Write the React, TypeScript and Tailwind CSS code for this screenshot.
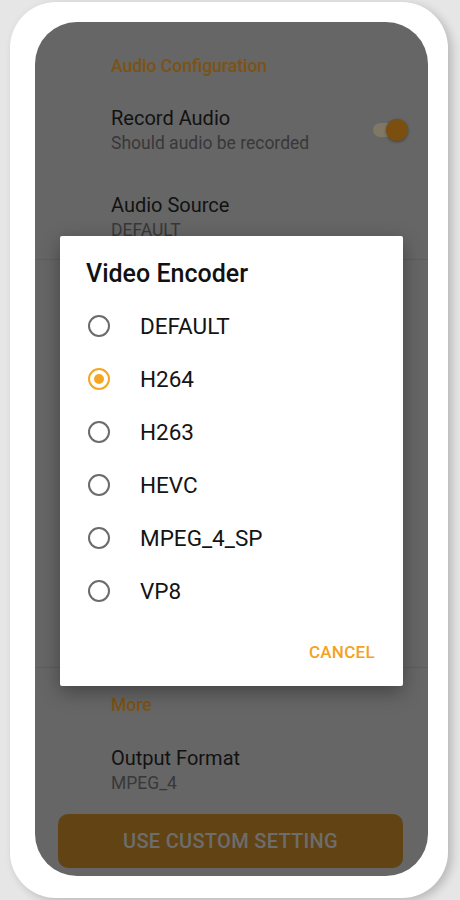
import React from "react";

const options = ["DEFAULT", "H264", "H263", "HEVC", "MPEG_4_SP", "VP8"];

export default function App() {
  return (
    <div
      className="w-[460px] h-[900px] bg-[#e6e6e6] overflow-hidden pt-[2px] pl-[10px]"
      style={{ fontFamily: "Roboto, 'Noto Sans', Arial, sans-serif" }}
    >
      <div className="w-[438px] h-[896px] rounded-[46px] bg-white shadow-[4px_3px_10px_rgba(0,0,0,0.2)] pt-[20px] pl-[25px] pr-[20px] pb-[22px]">
        <div className="relative w-[393px] h-[854px] rounded-[42px] bg-[#666666] overflow-hidden">
          {/* underlying settings content */}
          <div className="flex flex-col">
            <div className="pl-[76px] pt-[31px] text-[17.5px] leading-[26px] font-medium text-[#7c5314]">
              Audio Configuration
            </div>
            <div className="flex items-center pl-[76px] pr-[20px] mt-[26px]">
              <div className="flex-1 flex flex-col">
                <span className="text-[20px] leading-[26px] text-[#121212]">Record Audio</span>
                <span className="text-[17.5px] leading-[24px] text-[#383838]">Should audio be recorded</span>
              </div>
              <div className="relative w-[36px] h-[22px] flex items-center">
                <div className="w-[30px] h-[14px] rounded-full bg-[#807866] ml-[1px]" />
                <div className="absolute right-0 top-0 w-[22px] h-[22px] rounded-full bg-[#7a4f10] shadow-[0_1px_3px_rgba(0,0,0,0.35)]" />
              </div>
            </div>
            <div className="flex flex-col pl-[76px] mt-[37px]">
              <span className="text-[20px] leading-[26px] text-[#121212]">Audio Source</span>
              <span className="text-[17.5px] leading-[24px] text-[#383838]">DEFAULT</span>
            </div>
            <div className="h-[1px] bg-[#5e5e5e] mt-[17px]" />
            <div className="h-[407px]" />
            <div className="h-[1px] bg-[#5e5e5e]" />
            <div className="pl-[76px] mt-[25px] text-[17.5px] leading-[24px] font-medium text-[#7c5314]">More</div>
            <div className="flex flex-col pl-[76px] mt-[28px]">
              <span className="text-[20px] leading-[26px] text-[#121212]">Output Format</span>
              <span className="text-[17.5px] leading-[24px] text-[#383838]">MPEG_4</span>
            </div>
            <div className="ml-[23px] mr-[25px] mt-[19px] h-[54px] rounded-[10px] bg-[#624414] flex items-center justify-center text-[20px] font-medium tracking-[0.3px] text-[#6d6d6d]">
              USE CUSTOM SETTING
            </div>
          </div>

          {/* dialog */}
          <div className="absolute left-[25px] top-[214px] w-[343px] h-[450px] bg-white rounded-[2px] shadow-[0_6px_20px_rgba(0,0,0,0.35)] flex flex-col">
            <div className="pl-[26px] pt-[23px] text-[25px] leading-[30px] font-medium text-[#111111]">
              Video Encoder
            </div>
            <div className="flex flex-col mt-[10px]">
              {options.map((o) => {
                const sel = o === "H264";
                return (
                  <div key={o} className="flex items-center h-[53px]">
                    <div className="w-[78px] flex justify-center">
                      <div
                        className={
                          sel
                            ? "w-[22px] h-[22px] rounded-full border-2 border-[#f5a623] flex items-center justify-center"
                            : "w-[22px] h-[22px] rounded-full border-2 border-[#6b6b6b]"
                        }
                      >
                        {sel && <div className="w-[10px] h-[10px] rounded-full bg-[#f5a623]" />}
                      </div>
                    </div>
                    <span className="pl-[2px] text-[22.5px] leading-[26px] text-[#141414]">{o}</span>
                  </div>
                );
              })}
            </div>
            <div className="flex justify-end pr-[28px] mt-[23px]">
              <span className="text-[17px] leading-[24px] font-medium text-[#f5a21c] tracking-[0.3px]">CANCEL</span>
            </div>
          </div>
        </div>
      </div>
    </div>
  );
}
